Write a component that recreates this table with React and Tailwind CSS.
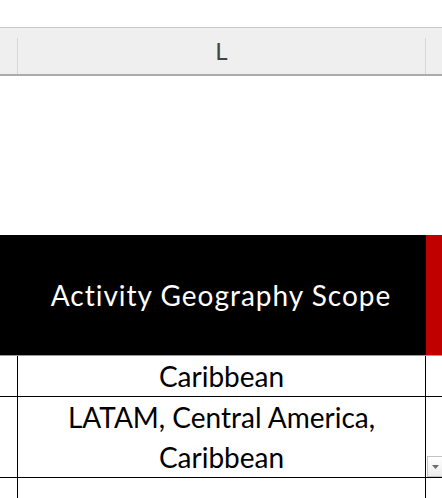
import React from "react";

const font = { fontFamily: '"Lato", "Open Sans", sans-serif' };

const Row = ({ height, children, dropdown }) => (
  <div className={`flex ${height}`}>
    <div className="w-[18px] border-r border-black" />
    <div className="w-[408px] border-r border-black flex flex-col items-center justify-center text-[28px] leading-[40px] text-black">
      {children}
    </div>
    <div className="flex-1 relative">
      {dropdown && (
        <div className="absolute left-[1px] top-[59px] w-[16px] h-[21px] border border-[#c4c4c4] bg-gradient-to-b from-white to-[#ececec] flex items-center justify-center">
          <svg width="7" height="4" viewBox="0 0 7 4">
            <path d="M0 0h7L3.5 4z" fill="#6b6b6b" />
          </svg>
        </div>
      )}
    </div>
  </div>
);

export default function App() {
  return (
    <div className="w-[442px] h-[498px] overflow-hidden bg-white" style={font}>
      <div className="h-[27px]" />
      <div className="h-[49px] flex bg-[#efefef] border-t border-[#c8c8c8] border-b-2 border-b-[#ababab]">
        <div className="w-[17px]" />
        <div className="w-px bg-[#d6d6d6] mt-[10px]" />
        <div className="w-[407px] flex items-center justify-center text-[24px] text-[#444]">L</div>
        <div className="w-px bg-[#d6d6d6] mt-[10px]" />
        <div className="flex-1" />
      </div>
      <div className="h-[159px]" />
      <div className="flex h-[121px] border-b border-[#9a9a9a]">
        <div className="w-[426px] bg-black flex items-center justify-center pl-[16px] text-white text-[28px] tracking-[1px]">
          Activity Geography Scope
        </div>
        <div className="flex-1 bg-[#c00000]" />
      </div>
      <Row height="h-[41px] border-b border-black">Caribbean</Row>
      <Row height="h-[81px] border-b border-black" dropdown>
        <span>LATAM, Central America,</span>
        <span>Caribbean</span>
      </Row>
      <Row height="h-[40px]" />
    </div>
  );
}
